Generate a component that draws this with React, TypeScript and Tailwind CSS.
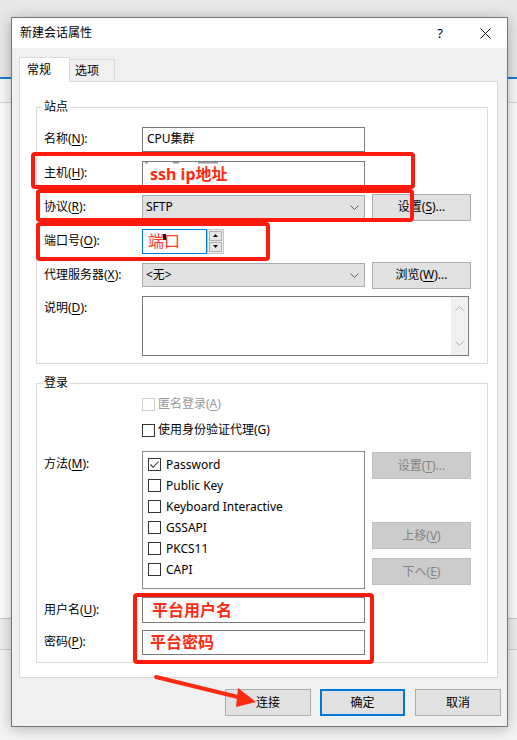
import type { ReactNode } from "react";

const METHODS: [string, boolean][] = [
  ["Password", true],
  ["Public Key", false],
  ["Keyboard Interactive", false],
  ["GSSAPI", false],
  ["PKCS11", false],
  ["CAPI", false],
];

const lbl = "w-[98px] shrink-0 text-[12px] leading-[16px] text-black whitespace-nowrap";

function U({ children }: { children: ReactNode }) {
  return <span className="underline underline-offset-[2px]">{children}</span>;
}

function Chevron({ up = false, color = "#606060" }: { up?: boolean; color?: string }) {
  return (
    <svg width="9" height="5" viewBox="0 0 9 5">
      <path d={up ? "M0.5 4.5 L4.5 0.5 L8.5 4.5" : "M0.5 0.5 L4.5 4.5 L8.5 0.5"} fill="none" stroke={color} strokeWidth="1" />
    </svg>
  );
}

function Btn({ children, disabled = false, className = "" }: { children: ReactNode; disabled?: boolean; className?: string }) {
  return (
    <div
      className={`h-[27px] w-[99px] shrink-0 flex items-center justify-center text-[12px] leading-[16px] border ${
        disabled ? "bg-[#cccccc] border-[#bfbfbf] text-[#838383]" : "bg-[#e1e1e1] border-[#adadad] text-black"
      } ${className}`}
    >
      {children}
    </div>
  );
}

function Check({ on = false, disabled = false }: { on?: boolean; disabled?: boolean }) {
  return (
    <div className={`w-[13px] h-[13px] shrink-0 border bg-white flex items-center justify-center ${disabled ? "border-[#cccccc]" : "border-[#333333]"}`}>
      {on && (
        <svg width="11" height="11" viewBox="0 0 11 11">
          <path d="M1.5 5.5 L4.2 8.3 L9.5 2.5" fill="none" stroke="#333" strokeWidth="1.1" />
        </svg>
      )}
    </div>
  );
}

export default function App() {
  return (
    <div className="relative w-[517px] h-[740px] overflow-hidden bg-[#f3f3f3] font-['Noto_Sans','Noto_Sans_CJK_SC',sans-serif] text-black">
      {/* window behind the dialog */}
      <div className="flex flex-col h-full">
        <div className="h-[77px] bg-[#e8e8e8]" />
        <div className="h-[2px] bg-[#1a7bd5]" />
        <div className="h-[24px] bg-[#fafafa] border-b border-[#d5d5d5]" />
        <div className="h-[516px] bg-white border-b border-[#c8c8c8]" />
        <div className="h-[31px] bg-[#efefef] border-b border-[#d0d0d0]" />
        <div className="flex-1 bg-[#f5f5f5]" />
      </div>

      {/* dialog */}
      <div className="absolute left-[11px] top-[17px] w-[497px] h-[710px] border border-[#747474] bg-[#f0f0f0] flex flex-col shadow-[0_2px_14px_rgba(0,0,0,0.28)]">
        <div className="h-[30px] bg-white flex items-center shrink-0">
          <span className="pl-[8px] text-[12px] leading-[16px]">新建会话属性</span>
          <span className="ml-auto w-[46px] text-center text-[13px] leading-[16px]">?</span>
          <span className="w-[44px] flex justify-center">
            <svg width="11" height="11" viewBox="0 0 11 11">
              <path d="M0.5 0.5 L10.5 10.5 M10.5 0.5 L0.5 10.5" stroke="#111" strokeWidth="1" />
            </svg>
          </span>
        </div>

        <div className="flex-1 flex flex-col px-[7px] pt-[9px]">
          {/* tabs */}
          <div className="flex items-end h-[24px]">
            <div className="relative z-10 -mb-px h-[25px] w-[51px] bg-white border-l border-t border-r border-[#d9d9d9] pl-[7px] flex items-center text-[12px] leading-[16px]">
              常规
            </div>
            <div className="h-[22px] w-[45px] border-t border-r border-[#d9d9d9] pl-[5px] flex items-center text-[12px] leading-[16px]">
              选项
            </div>
          </div>

          {/* panel */}
          <div className="h-[597px] w-[479px] bg-white border border-[#d9d9d9] pl-[16px] pt-[25px]">
            {/* 站点 */}
            <div className="relative w-[452px] border border-[#dcdcdc] pl-[7px] pt-[14px] pb-[7px]">
              <span className="absolute -top-[9px] left-[6px] bg-white px-[1px] text-[12px] leading-[16px]">站点</span>

              <div className="h-[34px] flex items-center">
                <div className={lbl}>名称(<U>N</U>):</div>
                <div className="h-[25px] w-[223px] border border-[#7a7a7a] bg-white flex items-center px-[4px] text-[12px]">CPU集群</div>
              </div>
              <div className="h-[34px] flex items-center">
                <div className={lbl}>主机(<U>H</U>):</div>
                <div className="h-[25px] w-[223px] border border-[#7a7a7a] bg-white flex items-center pl-[7px] pt-[2px] text-[16px] font-bold text-[#ff2a12]">ssh ip地址</div>
              </div>
              <div className="h-[34px] flex items-center">
                <div className={lbl}>协议(<U>R</U>):</div>
                <div className="h-[24px] w-[223px] border border-[#adadad] bg-[#e1e1e1] flex items-center justify-between pl-[3px] pr-[5px] text-[12px]">
                  SFTP
                  <Chevron />
                </div>
                <Btn className="ml-[7px]">设置(<U>S</U>)...</Btn>
              </div>
              <div className="h-[34px] flex items-center">
                <div className={lbl}>端口号(<U>O</U>):</div>
                <div className="h-[25px] w-[65px] border border-[#0078d7] bg-white flex items-center pl-[5px] text-[16px] text-[#ff3a28]">端口</div>
                <div className="h-[25px] w-[17px] border border-[#c4c4c4] bg-[#f0f0f0] flex flex-col p-px gap-px">
                  <div className="flex-1 border border-[#adadad] bg-[#e6e6e6] flex items-center justify-center">
                    <svg width="5" height="3" viewBox="0 0 5 3"><path d="M0 3 L2.5 0 L5 3 Z" fill="#111" /></svg>
                  </div>
                  <div className="flex-1 border border-[#adadad] bg-[#e6e6e6] flex items-center justify-center">
                    <svg width="5" height="3" viewBox="0 0 5 3"><path d="M0 0 L2.5 3 L5 0 Z" fill="#111" /></svg>
                  </div>
                </div>
              </div>
              <div className="h-[34px] flex items-center">
                <div className={lbl}>代理服务器(<U>X</U>):</div>
                <div className="h-[24px] w-[223px] border border-[#adadad] bg-[#e1e1e1] flex items-center justify-between pl-[3px] pr-[5px] text-[12px]">
                  &lt;无&gt;
                  <Chevron />
                </div>
                <Btn className="ml-[7px]">浏览(<U>W</U>)...</Btn>
              </div>
              <div className="mt-[4px] flex">
                <div className={`${lbl} pt-[4px]`}>说明(<U>D</U>):</div>
                <div className="h-[60px] w-[327px] border border-[#7a7a7a] bg-white flex justify-end">
                  <div className="w-[17px] h-full bg-[#f0f0f0] flex flex-col items-center justify-between py-[9px]">
                    <Chevron up color="#b0b0b0" />
                    <Chevron color="#b0b0b0" />
                  </div>
                </div>
              </div>
            </div>

            {/* 登录 */}
            <div className="relative mt-[19px] w-[452px] border border-[#dcdcdc] pl-[7px] pt-[10px] pb-[4px]">
              <span className="absolute -top-[9px] left-[6px] bg-white px-[1px] text-[12px] leading-[16px]">登录</span>

              <div className="h-[20px] flex items-center pl-[98px] gap-[3px]">
                <Check disabled />
                <span className="text-[12px] leading-[16px] text-[#9a9a9a]">匿名登录(<U>A</U>)</span>
              </div>
              <div className="mt-[6px] h-[20px] flex items-center pl-[98px] gap-[3px]">
                <Check />
                <span className="text-[12px] leading-[16px]">使用身份验证代理(G)</span>
              </div>

              <div className="mt-[11px] flex">
                <div className={`${lbl} pt-[5px]`}>方法(<U>M</U>):</div>
                <div className="h-[138px] w-[223px] border border-[#828790] bg-white pt-[2px] pl-[5px]">
                  {METHODS.map(([name, on]) => (
                    <div key={name} className="h-[21px] flex items-center gap-[5px]">
                      <Check on={on} />
                      <span className="text-[12px] leading-[16px]">{name}</span>
                    </div>
                  ))}
                </div>
                <div className="ml-[7px] flex flex-col pt-[1px]">
                  <Btn disabled>设置(<U>T</U>)...</Btn>
                  <Btn disabled className="mt-[43px]">上移(<U>V</U>)</Btn>
                  <Btn disabled className="mt-[9px]">下へ(<U>E</U>)</Btn>
                </div>
              </div>

              <div className="mt-[5px] h-[32px] flex items-center">
                <div className={lbl}>用户名(<U>U</U>):</div>
                <div className="h-[26px] w-[223px] border border-[#7a7a7a] bg-white flex items-center pl-[9px] text-[16px] font-bold text-[#ff2a12]">平台用户名</div>
              </div>
              <div className="h-[32px] flex items-center">
                <div className={lbl}>密码(<U>P</U>):</div>
                <div className="h-[25px] w-[223px] border border-[#7a7a7a] bg-white flex items-center pl-[7px] text-[16px] font-bold text-[#ff2a12]">平台密码</div>
              </div>
            </div>
          </div>

          {/* footer buttons */}
          <div className="mt-[11px] -mr-px flex justify-end">
            <div className="h-[27px] w-[86px] border border-[#adadad] bg-[#e1e1e1] flex items-center justify-center text-[12px] leading-[16px]">连接</div>
            <div className="ml-[9px] h-[27px] w-[85px] border-2 border-[#0078d7] bg-[#e1e1e1] flex items-center justify-center text-[12px] leading-[16px]">确定</div>
            <div className="ml-[10px] h-[27px] w-[86px] border border-[#adadad] bg-[#e1e1e1] flex items-center justify-center text-[12px] leading-[16px]">取消</div>
          </div>
        </div>
      </div>

      {/* red annotations drawn over the screenshot */}
      <svg className="absolute inset-0 pointer-events-none" width="517" height="740" viewBox="0 0 517 740">
        <g fill="none" stroke="#ff1a0d" strokeWidth="4">
          <rect x="33" y="154" width="380" height="33" rx="2" />
          <rect x="38" y="191" width="374" height="29" rx="2" />
          <rect x="38" y="224" width="230" height="35" rx="2" />
          <rect x="135" y="595" width="237" height="67" rx="2" />
          <path d="M156 677 L242 698" strokeWidth="4" strokeLinecap="round" stroke="#ff2a12" />
        </g>
        <path d="M256 702 L238 688 L236 707 Z" fill="#ff2a12" />
        <g fill="#9a9a9a">
          <rect x="145" y="162" width="3" height="1.5" />
          <rect x="173" y="162" width="6" height="1.5" />
          <rect x="198" y="162" width="20" height="1.5" />
        </g>
        <rect x="163" y="234" width="3" height="6" fill="#111" />
      </svg>
    </div>
  );
}
